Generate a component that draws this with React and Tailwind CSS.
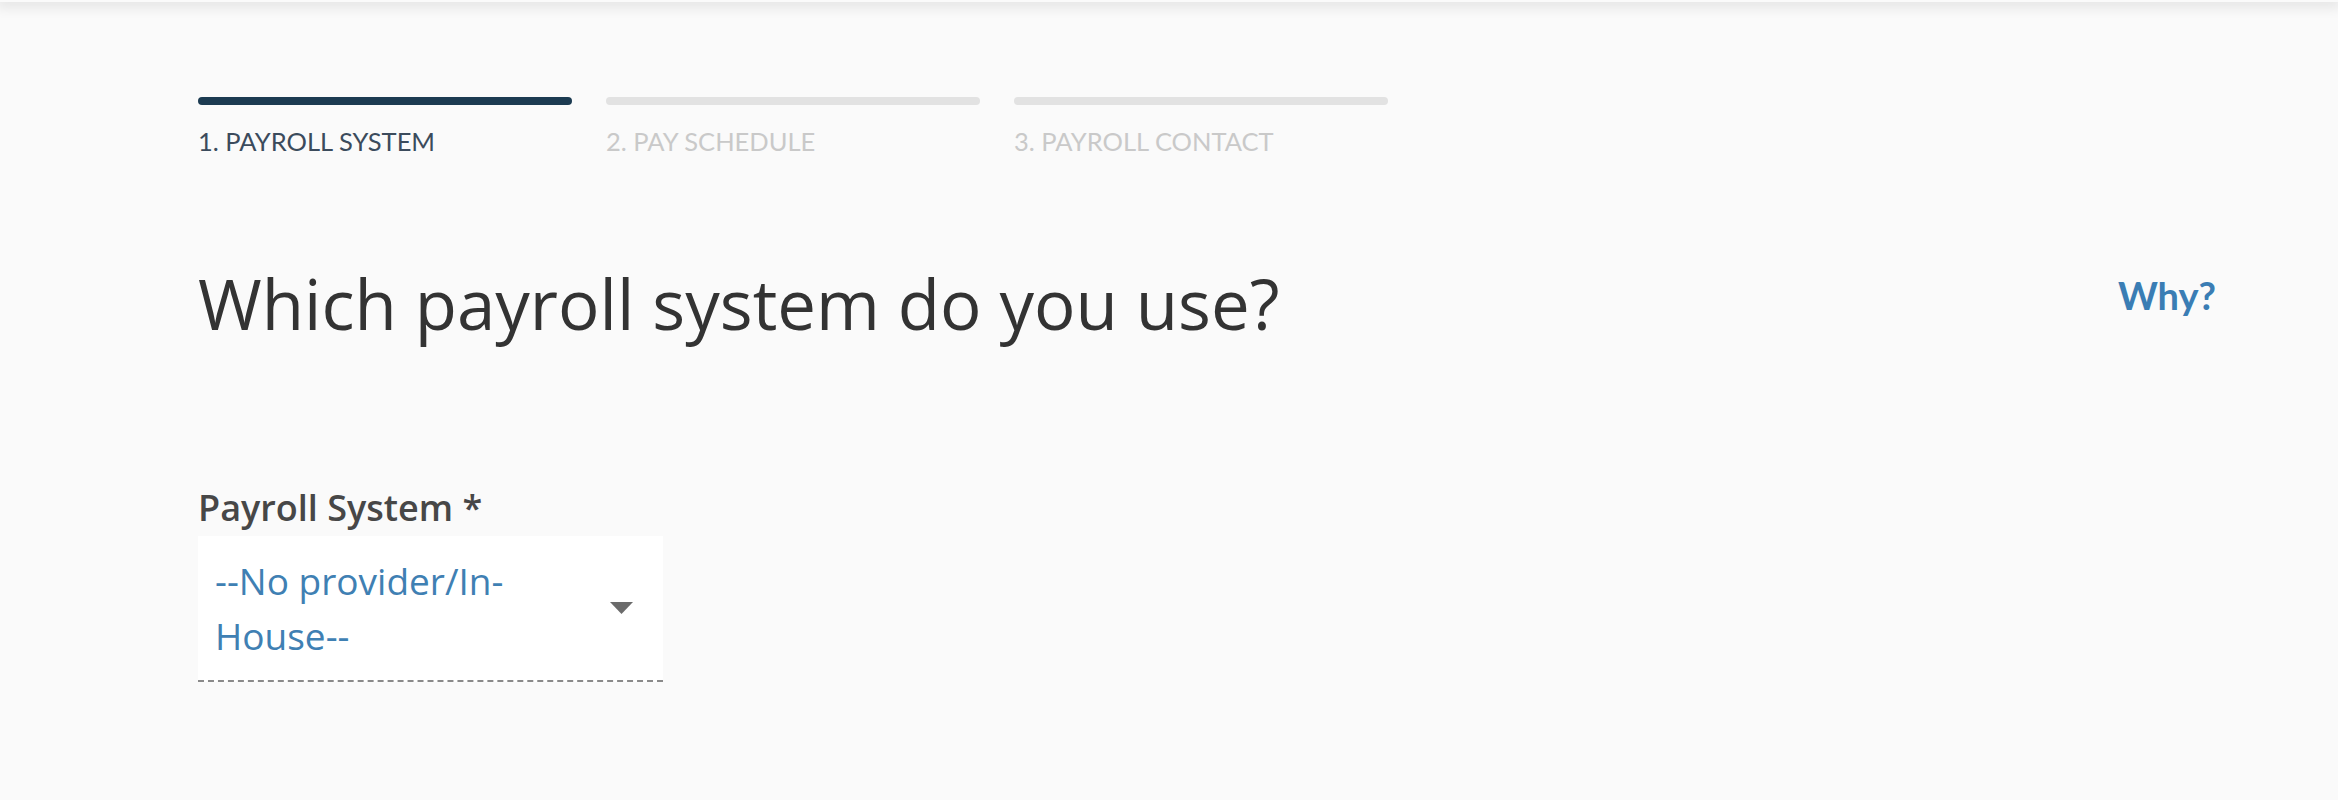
import React from "react";

const steps = [
  { label: "1. PAYROLL SYSTEM", active: true },
  { label: "2. PAY SCHEDULE", active: false },
  { label: "3. PAYROLL CONTACT", active: false },
];

function Stepper() {
  return (
    <div className="flex gap-[34px]">
      {steps.map((step) => (
        <div key={step.label} className="flex w-[374px] flex-col">
          <div
            className={`h-[8px] rounded-full ${
              step.active ? "bg-[#1c3b51]" : "bg-[#e2e2e2]"
            }`}
          />
          <span
            className={`mt-[21px] text-[25.5px] leading-[30px] ${
              step.active ? "text-[#3b4b5c]" : "text-[#c9c9c9]"
            }`}
          >
            {step.label}
          </span>
        </div>
      ))}
    </div>
  );
}

function PayrollSelect() {
  return (
    <div className="flex flex-col font-['Open_Sans',sans-serif]">
      <label className="text-[36px] font-semibold leading-[40px] text-[#474747]">
        Payroll System *
      </label>
      <div className="mt-[8px] flex h-[146px] w-[465px] items-center border-b-2 border-dashed border-[#8a8a8a] bg-white pl-[17px] pr-[30px]">
        <span className="w-[340px] text-[37px] leading-[55px] text-[#3f80b3]">
          --No provider/In-House--
        </span>
        <svg className="ml-auto h-[12px] w-[23px]" viewBox="0 0 23 12">
          <path d="M0 0 H23 L11.5 12 Z" fill="#6b6b6b" />
        </svg>
      </div>
    </div>
  );
}

export default function App() {
  return (
    <div
      className="relative min-h-[800px] w-full bg-[#fafafa]"
      style={{ fontFamily: "Lato, 'Open Sans', sans-serif" }}
    >
      <div className="h-[2px] w-full shadow-[0_0_14px_4px_rgba(0,0,0,0.12)]" />
      <div className="pl-[198px] pr-[122px] pt-[95px]">
        <Stepper />
        <div className="mt-[102px] flex items-start justify-between">
          <h1 className="font-['Open_Sans',sans-serif] text-[69px] leading-[90px] text-[#333333]">
            Which payroll system do you use?
          </h1>
          <a className="mt-[17px] text-[38px] font-bold leading-[40px] text-[#3a7db4]">
            Why?
          </a>
        </div>
        <div className="mt-[140px]">
          <PayrollSelect />
        </div>
      </div>
    </div>
  );
}
